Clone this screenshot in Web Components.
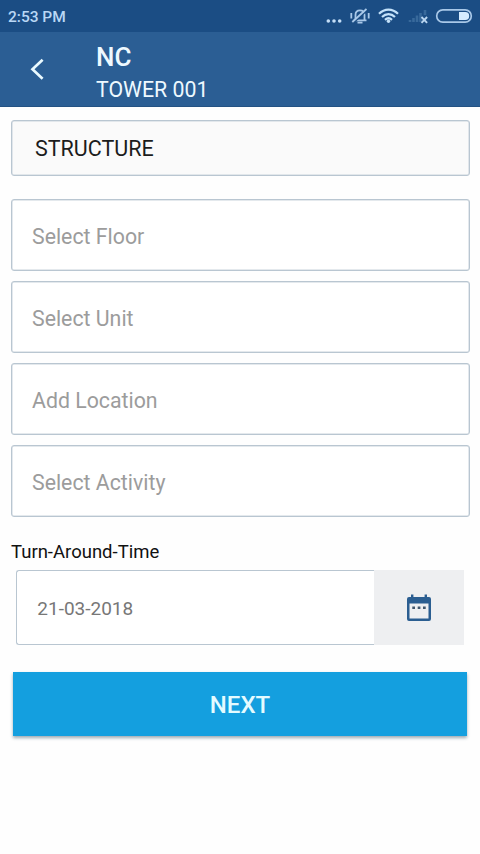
<!DOCTYPE html>
<html lang="en">
<head>
<meta charset="utf-8">
<title>NC - Tower 001</title>
<style>
html, body { margin: 0; height: 100%; background: #fefefe; font-family: Roboto, sans-serif; }
</style>
</head>
<body>
<task-screen></task-screen>
<script>
const define = (name, html) => {
  const template = document.createElement('template');
  template.innerHTML = html;
  customElements.define(name, class extends HTMLElement {
    constructor() {
      super();
      this.attachShadow({ mode: 'open' }).append(template.content.cloneNode(true));
    }
  });
};

define('status-bar', `
<style>
:host { display: flex; box-sizing: border-box; height: 32px; padding-left: 8px; background: #1b4d84; color: #b9d7f5; }
span { flex: 1; font-size: 15.5px; line-height: 34px; font-weight: 500; }
svg { display: block; flex: none; }
</style>
<span><slot></slot></span>
<svg width="160" height="32" viewBox="320 0 160 32" fill="none">
  <g fill="#c4def7"><circle cx="328.3" cy="21" r="1.8"/><circle cx="334" cy="21" r="1.8"/><circle cx="339.7" cy="21" r="1.8"/></g>
  <g stroke="#a9c8e8" stroke-width="1.800">
    <path d="M353.500 20.300h13M355.500 20v-5c0-3 1.800-4.600 4.500-4.600s4.500 1.600 4.500 4.600v5M351.300 13v5.500M368.700 13v5.500M357.500 22.600h5"/>
    <path d="M353.300 22.900L367.700 10" stroke="#1b4d84" stroke-width="1.500"/>
    <path d="M352.300 22L366.500 9"/>
  </g>
  <g stroke="#c4e2fa" stroke-width="2.200">
    <path d="M379 13.800c5.500-5.700 13.500-5.700 19 0"/>
    <path d="M382 17c3.900-3.800 9.100-3.800 13 0"/>
    <path d="M385 19.900c2.100-2 4.900-2 7 0"/>
  </g>
  <circle cx="388.500" cy="21.300" r="1.700" fill="#c4e2fa"/>
  <path d="M410 22v-2M413.500 22v-4M417 22v-6.500M420.500 22v-9M425 15v-5" stroke="#38699b" stroke-width="2.600"/>
  <path d="M421.500 17l5.600 5.800M427.100 17l-5.600 5.800" stroke="#b9d5f0" stroke-width="1.900"/>
  <rect x="436.700" y="9.900" width="34.600" height="12.200" rx="6.100" stroke="#a9c8e8" stroke-width="1.700"/>
  <path d="M459 12h6.300a3.900 4 0 0 1 0 8h-6.300z" fill="#d5ebff"/>
</svg>`);

define('app-header', `
<style>
:host { display: grid; box-sizing: border-box; grid-template-columns: 96px 1fr; height: 75px; padding-top: 9px; background: #2b5e94; color: #eef9ff; border-bottom: 1px solid #245283; }
svg { display: block; margin: 16px 0 0 27px; }
.title { font-size: 26px; font-weight: 500; line-height: 32px; }
.sub { font-size: 21.300px; line-height: 33px; }
</style>
<svg width="20" height="24" viewBox="0 0 20 24"><path d="M15.600 2.800L5.500 12.300l10.100 9.500" fill="none" stroke="#eafaff" stroke-width="2.700"/></svg>
<div><div class="title"><slot name="title"></slot></div><div class="sub"><slot></slot></div></div>`);

define('outline-field', `
<style>
:host { display: flex; align-items: center; box-sizing: border-box; height: 72px; padding: 2px 0 0 20.500px; border: 1px solid #b9c6d1; border-radius: 3px; background: #fff; color: #9c9c9c; font-size: 21.300px; box-shadow: inset 0 0 0 .5px #c9d3dc; }
:host([filled]) { height: 56px; padding: 1px 0 0 23.500px; background: #fafafa; color: #1c1c1c; font-size: 21.500px; }
</style>
<slot></slot>`);

define('date-field', `
<style>
:host { display: grid; grid-template-columns: 358px 90px; height: 75px; }
.value { display: flex; align-items: center; padding: 2px 0 0 20.300px; border: 1px solid #b9c6d1; border-right: 0; border-radius: 3px 0 0 3px; background: #fff; color: #777; font-size: 19px; }
.pick { display: flex; align-items: center; justify-content: center; background: #eeeff1; }
svg { display: block; }
</style>
<div class="value"><slot></slot></div>
<div class="pick"><svg width="26" height="28" viewBox="0 0 26 28">
  <path fill="#2b5e91" fill-rule="evenodd" d="M5 .500h2.400v2.500h11.200V.500H21v2.500h2a2 2 0 0 1 2 2V25a2 2 0 0 1-2 2H3a2 2 0 0 1-2-2V5a2 2 0 0 1 2-2h2zM3.500 9.500v15h19v-15z"/>
  <path fill="#40566c" d="M6.300 12.500h2.700v2.600h-2.700zM11.700 12.500h2.700v2.600h-2.700zM17 12.500h2.700v2.600h-2.700z"/>
</svg></div>`);

define('action-button', `
<style>
:host { display: flex; align-items: center; justify-content: center; box-sizing: border-box; height: 64px; padding-top: 2px; background: #149fdf; color: #e4fbff; font-size: 24px; font-weight: 500; box-shadow: 0 2px 3px rgba(40,70,90,.45); }
</style>
<slot></slot>`);

define('task-screen', `
<style>
:host { display: block; }
main { display: flex; flex-direction: column; padding: 13px 10.500px 0; }
.fields { display: grid; gap: 10px; margin-top: 23px; }
.label { margin: 22px 0 0 .5px; height: 30px; line-height: 27px; font-size: 18.500px; color: #111; }
date-field { margin: 1px 5px 0 5.500px; }
action-button { margin: 27px 2.500px 0; }
</style>
<status-bar>2:53 PM</status-bar>
<app-header><span slot="title">NC</span>TOWER 001</app-header>
<main>
  <outline-field filled>STRUCTURE</outline-field>
  <div class="fields">
    <outline-field>Select Floor</outline-field>
    <outline-field>Select Unit</outline-field>
    <outline-field>Add Location</outline-field>
    <outline-field>Select Activity</outline-field>
  </div>
  <div class="label">Turn-Around-Time</div>
  <date-field>21-03-2018</date-field>
  <action-button>NEXT</action-button>
</main>`);
</script>
</body>
</html>
